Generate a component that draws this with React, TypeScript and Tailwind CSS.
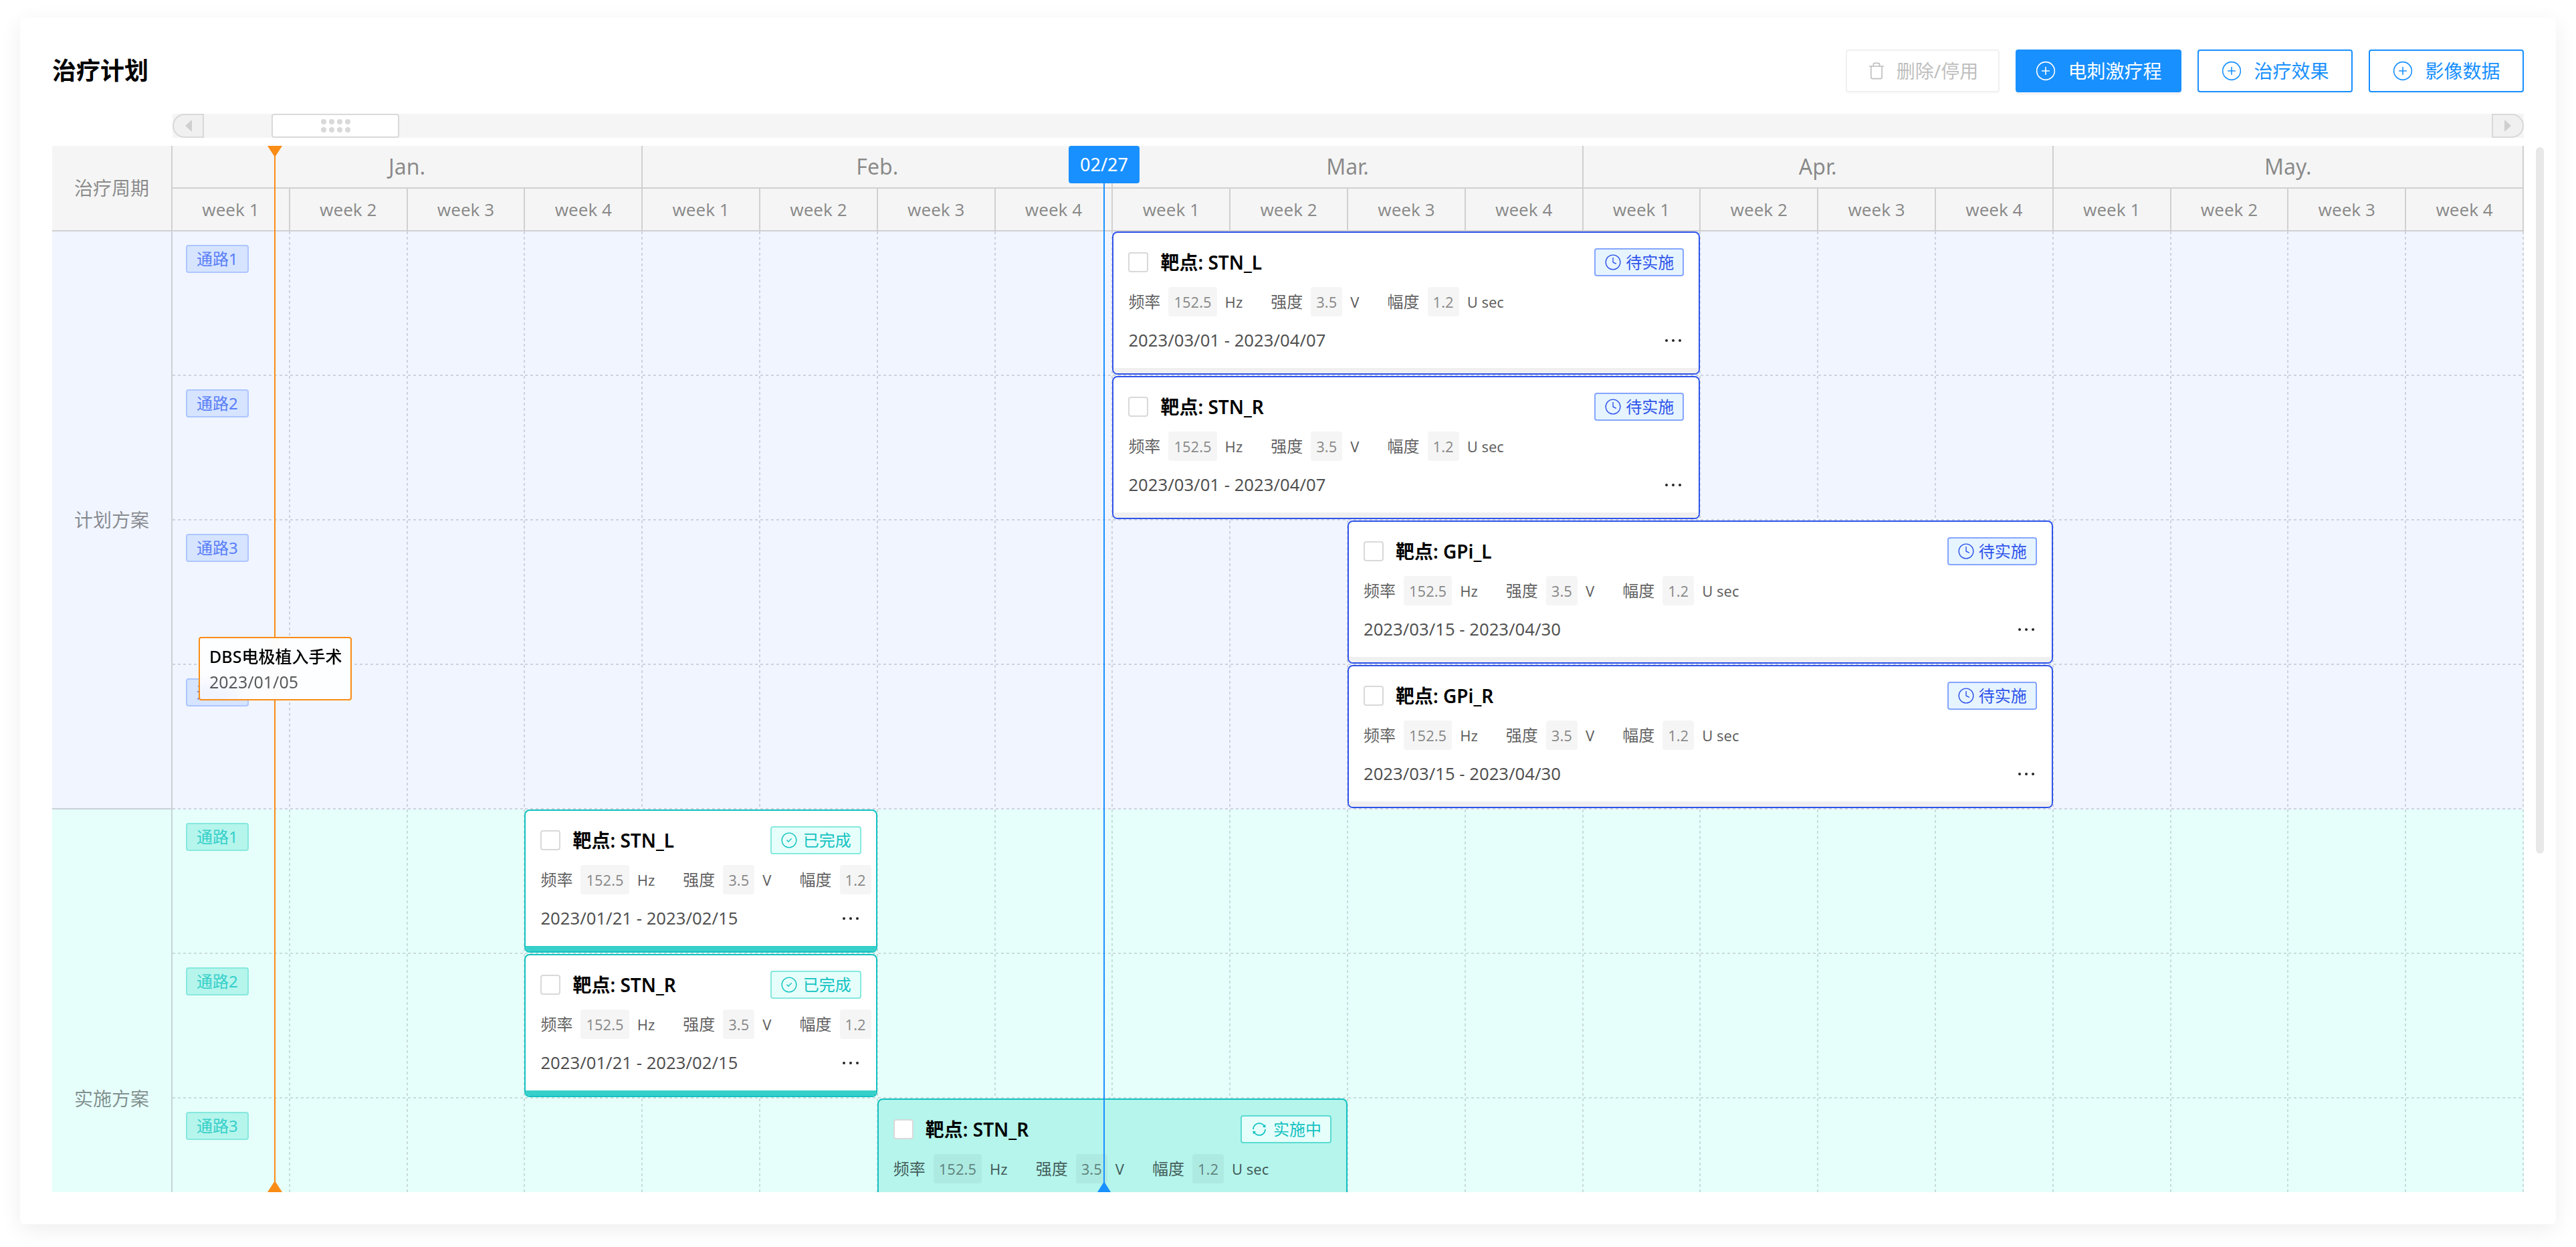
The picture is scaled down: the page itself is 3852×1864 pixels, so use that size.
import React from "react";
import { Trash, CirclePlus, Clock, CircleCheck } from "lucide-react";
import { AiOutlineSync } from "react-icons/ai";

const months = ["Jan.", "Feb.", "Mar.", "Apr.", "May."];
const weeks = ["week 1", "week 2", "week 3", "week 4"];

function ChannelTag({ name, teal }: { name: string; teal?: boolean }) {
  return (
    <div
      className={
        teal
          ? "justify-self-start self-start mt-[20px] ml-[20px] h-[42px] px-[14px] flex items-center rounded-[4px] border-2 border-[#87e8de] bg-[#b5f5ec] text-[#36cfc9] text-[24px] whitespace-nowrap"
          : "justify-self-start self-start mt-[20px] ml-[20px] h-[42px] px-[14px] flex items-center rounded-[4px] border-2 border-[#adc6ff] bg-[#d6e4ff] text-[#597ef7] text-[24px] whitespace-nowrap"
      }
    >
      {name}
    </div>
  );
}

function Param({ label, value, unit }: { label: string; value: string; unit: string }) {
  return (
    <div className="flex items-center shrink-0 mr-[42px]">
      <span className="text-[24px] text-black/65">{label}</span>
      <span className="ml-[12px] h-[44px] px-[8px] flex items-center rounded-[4px] bg-black/[.04] text-[22px] text-black/45">{value}</span>
      <span className="ml-[12px] text-[22px] text-black/65">{unit}</span>
    </div>
  );
}

type Kind = "pending" | "done" | "active";

function Status({ kind }: { kind: Kind }) {
  if (kind === "pending")
    return (
      <div className="h-[42px] px-[13px] flex items-center gap-[6px] rounded-[4px] border-2 border-[#85a5ff] bg-[#e6f4ff] text-[#2f54eb] text-[24px] whitespace-nowrap shrink-0">
        <Clock size={26} strokeWidth={1.3} />
        待实施
      </div>
    );
  if (kind === "done")
    return (
      <div className="h-[42px] px-[13px] flex items-center gap-[8px] rounded-[4px] border-2 border-[#87e8de] bg-[#e6fffb] text-[#13c2c2] text-[24px] whitespace-nowrap shrink-0">
        <CircleCheck size={26} strokeWidth={1.3} />
        已完成
      </div>
    );
  return (
    <div className="h-[42px] pl-[14px] pr-[13px] flex items-center gap-[9px] rounded-[4px] border-2 border-[#5cdbd3] bg-[#e6fffb] text-[#13c2c2] text-[24px] whitespace-nowrap shrink-0">
      <AiOutlineSync size={24} />
      实施中
    </div>
  );
}

function PlanCard({
  target,
  range,
  kind,
  place,
}: {
  target: string;
  range: string;
  kind: Kind;
  place: string;
}) {
  const shell =
    kind === "pending"
      ? "border-[#2f54eb] bg-white"
      : kind === "done"
        ? "border-[#13c2c2] bg-white"
        : "border-[#13c2c2] bg-[#b5f5ec]";
  const band = kind === "pending" ? "bg-[#f0f0f0]" : "bg-[#36cfc9]";
  return (
    <div className={`${place} z-10 -ml-[1px] mr-[1px] h-[214px] self-start rounded-[8px] border-2 overflow-hidden flex flex-col ${shell}`}>
      <div className="flex-1 min-h-0 pt-[23px] pl-[22px] pr-[22px] flex flex-col">
        <div className="flex items-center justify-between h-[42px]">
          <div className="flex items-center">
            <span className="w-[30px] h-[30px] rounded-[4px] border-2 border-[#d9d9d9] bg-white" />
            <span className="ml-[18px] text-[28px] font-semibold text-black whitespace-nowrap">{target}</span>
          </div>
          <Status kind={kind} />
        </div>
        <div className="mt-[16px] flex items-center whitespace-nowrap">
          <Param label="频率" value="152.5" unit="Hz" />
          <Param label="强度" value="3.5" unit="V" />
          <Param label="幅度" value="1.2" unit="U sec" />
        </div>
        <div className="mt-[14px] h-[44px] flex items-center justify-between text-[25.7px] text-black/70 whitespace-nowrap">
          <span>{range}</span>
          <span className="flex gap-[6px] mr-[4px]">
            <i className="w-[4px] h-[4px] rounded-full bg-black/85" />
            <i className="w-[4px] h-[4px] rounded-full bg-black/85" />
            <i className="w-[4px] h-[4px] rounded-full bg-black/85" />
          </span>
        </div>
      </div>
      <div className={`h-[8px] shrink-0 ${band}`} />
    </div>
  );
}

function ActionButton({ label, primary }: { label: string; primary?: boolean }) {
  return (
    <button
      className={
        primary
          ? "h-[64px] w-[248px] flex items-center justify-center gap-[17px] rounded-[4px] border-2 border-[#1890ff] bg-[#1890ff] text-white text-[28px] shadow-[0_4px_0_rgba(0,0,0,0.04)]"
          : "h-[64px] w-[232px] flex items-center justify-center gap-[17px] rounded-[4px] border-2 border-[#1890ff] bg-white text-[#1890ff] text-[28px] shadow-[0_2px_0_rgba(0,0,0,0.02)]"
      }
    >
      <CirclePlus size={32} strokeWidth={1.2} />
      {label}
    </button>
  );
}

export default function App() {
  const rows = Array.from({ length: 8 }, (_, i) => i);
  const cols = Array.from({ length: 20 }, (_, i) => i);
  return (
    <div className="w-[3852px] h-[1864px] bg-white pt-[26px] px-[30px] overflow-hidden font-['Noto_Sans','Noto_Sans_CJK_SC',sans-serif]">
      <div className="relative h-[1804px] rounded-[6px] bg-white shadow-[0_8px_32px_rgba(0,0,0,0.07)] px-[48px] pt-[48px]">
        {/* page header */}
        <div className="flex items-center justify-between h-[64px]">
          <h1 className="text-[36px] leading-none font-bold text-black">治疗计划</h1>
          <div className="flex items-center gap-[24px]">
            <button className="h-[64px] w-[230px] flex items-center justify-center gap-[16px] rounded-[4px] border-2 border-[#f0f0f0] bg-white text-[#bfbfbf] text-[28px] shadow-[0_2px_0_rgba(0,0,0,0.02)]">
              <Trash size={28} strokeWidth={1.4} />
              删除/停用
            </button>
            <ActionButton label="电刺激疗程" primary />
            <ActionButton label="治疗效果" />
            <ActionButton label="影像数据" />
          </div>
        </div>

        {/* range scroller */}
        <div className="mt-[32px] ml-[180px] h-[36px] bg-[#f5f5f5] flex items-center justify-between">
          <div className="h-[36px] flex items-center">
            <div className="w-[47px] h-[36px] rounded-l-full border-2 border-[#d9d9d9] bg-[#f0f0f0] flex items-center justify-center">
              <span className="w-0 h-0 border-y-[9px] border-y-transparent border-r-[10px] border-r-[#cfcfcf]" />
            </div>
            <div className="ml-[101px] w-[191px] h-[36px] rounded-[4px] border-2 border-[#d9d9d9] bg-white grid grid-cols-[repeat(4,8px)] gap-x-[4px] gap-y-[4px] justify-center content-center">
              {Array.from({ length: 8 }, (_, i) => (
                <span key={i} className="w-[8px] h-[8px] rounded-full bg-[#d9d9d9]" />
              ))}
            </div>
          </div>
          <div className="w-[48px] h-[36px] rounded-r-full border-2 border-[#d9d9d9] bg-[#f0f0f0] flex items-center justify-center">
            <span className="w-0 h-0 border-y-[9px] border-y-transparent border-l-[10px] border-l-[#cfcfcf]" />
          </div>
        </div>

        {/* timeline */}
        <div className="relative mt-[12px] h-[1564px] overflow-hidden">
          {/* header */}
          <div className="flex h-[128px] bg-[#f5f5f5] text-black/45">
            <div className="w-[180px] shrink-0 flex items-center justify-center border-r-2 border-b-2 border-[#d0d0d0] text-[28px]">
              治疗周期
            </div>
            <div className="flex-1 grid grid-cols-[repeat(5,703.2px)] grid-rows-[64px_64px]">
              {months.map((m) => (
                <div key={m} className="col-span-1 flex items-center justify-center text-[32px] border-b-2 border-r-2 border-[#d0d0d0]">
                  {m}
                </div>
              ))}
              {months.map((m) => (
                <div key={m} className="grid grid-cols-4">
                  {weeks.map((w) => (
                    <div key={w} className="flex items-center justify-center text-[26px] border-b-2 border-r-2 border-[#d0d0d0]">
                      {w}
                    </div>
                  ))}
                </div>
              ))}
            </div>
          </div>

          {/* body */}
          <div className="flex">
            <div className="w-[180px] shrink-0 text-[28px]">
              <div className="h-[864px] flex items-center justify-center bg-[#f0f5ff] border-r-2 border-b-2 border-[#cbd0d8] text-black/45">计划方案</div>
              <div className="h-[864px] flex items-center justify-center bg-[#e6fffb] border-r-2 border-[#c3d6d3] text-black/45">实施方案</div>
            </div>
            <div className="grid grid-cols-[repeat(20,175.8px)] grid-rows-[repeat(8,216px)]">
              {rows.flatMap((r) =>
                cols.map((c) => (
                  <div
                    key={`${r}-${c}`}
                    style={{ gridRow: r + 1, gridColumn: c + 1 }}
                    className={
                      r < 4
                        ? "[background:linear-gradient(#ced2dd_55%,transparent_55%)_right_top/2px_8px_repeat-y,linear-gradient(90deg,#ced2dd_55%,transparent_55%)_left_bottom/8px_2px_repeat-x,#f0f5ff]"
                        : "[background:linear-gradient(#c8dcd9_55%,transparent_55%)_right_top/2px_8px_repeat-y,linear-gradient(90deg,#c8dcd9_55%,transparent_55%)_left_bottom/8px_2px_repeat-x,#e6fffb]"
                    }
                  />
                ))
              )}

              <div className="row-start-1 col-start-1 col-span-2 z-[1]"><ChannelTag name="通路1" /></div>
              <div className="row-start-2 col-start-1 col-span-2 z-[1]"><ChannelTag name="通路2" /></div>
              <div className="row-start-3 col-start-1 col-span-2 z-[1]"><ChannelTag name="通路3" /></div>
              <div className="row-start-4 col-start-1 col-span-2 z-[1]"><ChannelTag name="通路4" /></div>
              <div className="row-start-5 col-start-1 col-span-2 z-[1]"><ChannelTag name="通路1" teal /></div>
              <div className="row-start-6 col-start-1 col-span-2 z-[1]"><ChannelTag name="通路2" teal /></div>
              <div className="row-start-7 col-start-1 col-span-2 z-[1]"><ChannelTag name="通路3" teal /></div>

              <PlanCard place="row-start-1 col-start-9 col-span-5" target="靶点: STN_L" range="2023/03/01 - 2023/04/07" kind="pending" />
              <PlanCard place="row-start-2 col-start-9 col-span-5" target="靶点: STN_R" range="2023/03/01 - 2023/04/07" kind="pending" />
              <PlanCard place="row-start-3 col-start-11 col-span-6" target="靶点: GPi_L" range="2023/03/15 - 2023/04/30" kind="pending" />
              <PlanCard place="row-start-4 col-start-11 col-span-6" target="靶点: GPi_R" range="2023/03/15 - 2023/04/30" kind="pending" />
              <PlanCard place="row-start-5 col-start-4 col-span-3" target="靶点: STN_L" range="2023/01/21 - 2023/02/15" kind="done" />
              <PlanCard place="row-start-6 col-start-4 col-span-3" target="靶点: STN_R" range="2023/01/21 - 2023/02/15" kind="done" />
              <PlanCard place="row-start-7 col-start-7 col-span-4" target="靶点: STN_R" range="2023/02/16 - 2023/03/15" kind="active" />
            </div>
          </div>

          {/* surgery marker */}
          <div className="absolute z-20 left-[332px] top-0 bottom-0 w-[2px] bg-[#fa8c16]" />
          <div className="absolute z-20 left-[322px] top-0 w-0 h-0 border-x-[11px] border-x-transparent border-t-[17px] border-t-[#fa8c16]" />
          <div className="absolute z-20 left-[322px] bottom-0 w-0 h-0 border-x-[11px] border-x-transparent border-b-[17px] border-b-[#fa8c16]" />
          <div className="absolute z-30 left-[219px] top-[734px] w-[229px] h-[95px] rounded-[4px] border-2 border-[#fa8c16] bg-white/85 backdrop-blur-sm pl-[14px] flex flex-col justify-center gap-[6px]">
            <div className="text-[25px] leading-[32px] font-medium text-black whitespace-nowrap">DBS电极植入手术</div>
            <div className="text-[25px] leading-[32px] text-black/65">2023/01/05</div>
          </div>

          {/* today marker */}
          <div className="absolute z-20 left-[1572px] top-0 bottom-0 w-[2px] bg-[#1890ff]" />
          <div className="absolute z-20 left-[1520px] top-0 w-[106px] h-[56px] rounded-[4px] bg-[#1890ff] text-white text-[27px] flex items-center justify-center">02/27</div>
          <div className="absolute z-20 left-[1563px] bottom-0 w-0 h-0 border-x-[10px] border-x-transparent border-b-[16px] border-b-[#1890ff]" />
        </div>

        {/* vertical scrollbar */}
        <div className="absolute right-[18px] top-[194px] w-[12px] h-[1056px] rounded-full bg-[#e8e8e8]" />
      </div>
    </div>
  );
}
